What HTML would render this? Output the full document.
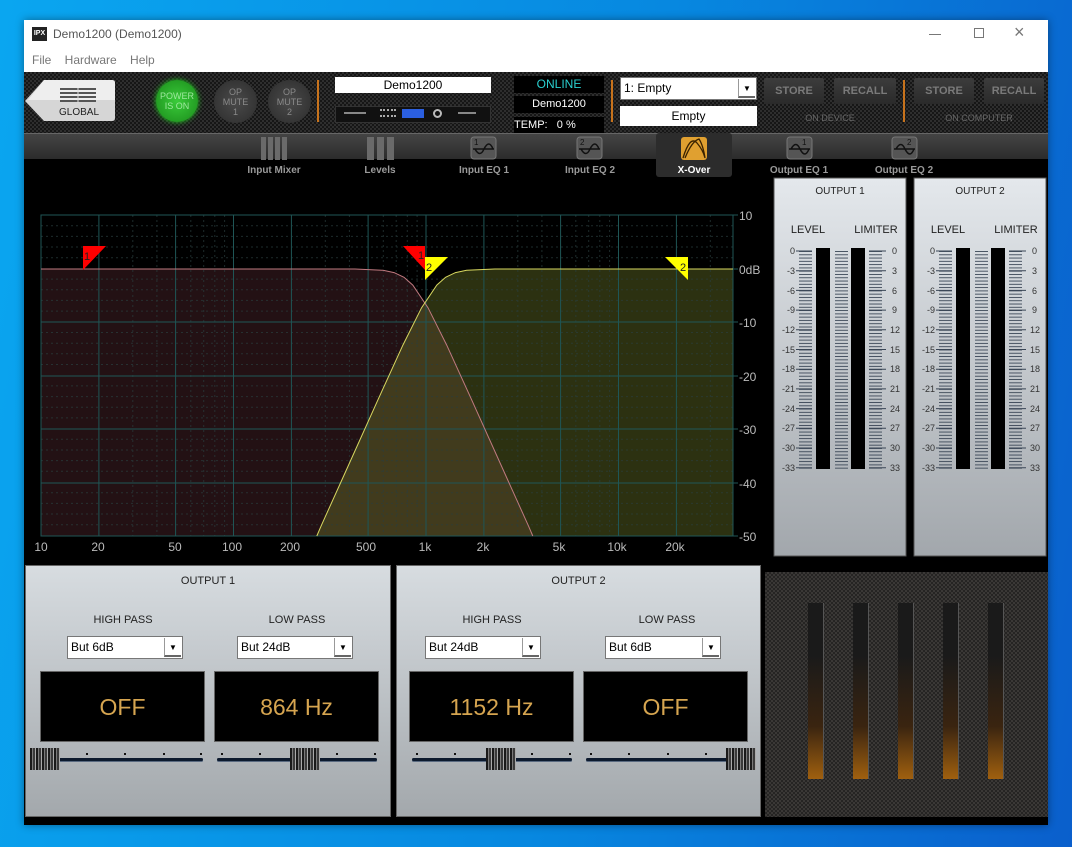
<!DOCTYPE html>
<html><head><meta charset="utf-8">
<style>
*{margin:0;padding:0;box-sizing:border-box}
body{width:1072px;height:847px;position:relative;overflow:hidden;font-family:"Liberation Sans",sans-serif;
background:linear-gradient(100deg,#0aa6f0 0%,#0788e0 55%,#0a5fcc 100%)}
.a{position:absolute}
.chk{background-color:#1c1c1c;background-image:repeating-conic-gradient(#2e2e2e 0 25%,#161616 0 50%);background-size:4px 4px}
.circ{border-radius:50%;text-align:center;font-size:9px;line-height:10px;color:#8a8a8a}
.btn{background:linear-gradient(#3c3c3c,#2a2a2a);color:#7a7a7a;font-size:11px;font-weight:bold;text-align:center;line-height:26px;border-radius:2px}
.tab{color:#9a9a9a;font-size:10px;font-weight:bold;text-align:center;width:100px}
.pan{background:linear-gradient(#d7dce0,#a3a8ac);border:1px solid #666}
.lbl{font-size:11px;color:#222;text-align:center}
.sel{background:#fff;border:1px solid #777;font-size:12px;color:#000;padding-left:3px;line-height:21px;height:23px}
.sel b{position:absolute;right:1px;top:1px;width:17px;height:19px;border-left:1px solid #999;border-bottom:2px solid #666;font-size:8px;text-align:center;line-height:19px;font-weight:normal}
.disp{background:#000;border:1px solid #666;color:#d6a550;font-size:23px;text-align:center;line-height:70px}
.trk{height:3px;background:#0c1a2e;border-radius:2px;box-shadow:0 1px 0 #5a6a80}
.knob{width:30px;height:22px;background:repeating-linear-gradient(90deg,#1a1a1a 0 2px,#7a7a7a 2px 3px,#3a3a3a 3px 5px,#aaa 5px 6px)}
.dot{width:2px;height:2px;background:#111}
</style></head><body>
<div class="a" style="left:24px;top:20px;width:1024px;height:805px;background:#000;box-shadow:0 0 8px rgba(0,0,0,.4)"></div>
<div class="a" style="left:24px;top:20px;width:1024px;height:52px;background:#fff"></div>
<div class="a" style="left:32px;top:27px;width:15px;height:14px;background:#222;color:#fff;font-size:7px;font-weight:bold;line-height:14px;text-align:center">IPX</div>
<div class="a" style="left:53px;top:27px;font-size:12px;color:#555">Demo1200 (Demo1200)</div>
<div class="a" style="left:32px;top:53px;font-size:12px;color:#777;word-spacing:10px">File Hardware Help</div>
<div class="a" style="left:929px;top:34px;width:12px;height:1px;background:#777"></div>
<div class="a" style="left:974px;top:28px;width:10px;height:10px;border:1px solid #777"></div>
<div class="a" style="left:1014px;top:22px;font-size:18px;color:#777">×</div>
<div class="a chk" style="left:24px;top:72px;width:1024px;height:62px"></div>
<svg class="a" style="left:24px;top:80px" width="92" height="42"><path d="M20 0H88Q91 0 91 3V38Q91 41 88 41H20L1 21Z" fill="#d6d6d6"/><path d="M20 0H88Q91 0 91 3V20H4Z" fill="#eee"/>
<g stroke="#555" stroke-width="2"><path d="M36 9h36M36 13h36M36 17h36M36 21h36"/></g><path d="M54 8v15" stroke="#ddd"/>
<text x="55" y="35" font-size="10" font-family="Liberation Sans" text-anchor="middle" fill="#222">GLOBAL</text></svg>
<div class="a circ" style="left:156px;top:80px;width:42px;height:42px;background:radial-gradient(#3acb3a,#1a8a1a);box-shadow:0 0 6px #2c2;color:#9ee89e;padding-top:11px">POWER<br>IS ON</div>
<div class="a circ" style="left:214px;top:80px;width:43px;height:43px;background:radial-gradient(#4a4a4a,#2c2c2c);padding-top:7px">OP<br>MUTE<br>1</div>
<div class="a circ" style="left:268px;top:80px;width:43px;height:43px;background:radial-gradient(#4a4a4a,#2c2c2c);padding-top:7px">OP<br>MUTE<br>2</div>
<div class="a" style="left:317px;top:80px;width:2px;height:42px;background:#c8731c"></div>
<div class="a" style="left:335px;top:77px;width:156px;height:16px;background:#fff;font-size:12px;text-align:center;line-height:16px">Demo1200</div>
<div class="a" style="left:335px;top:106px;width:156px;height:17px;background:#111;border:1px solid #333"></div>
<div class="a" style="left:402px;top:109px;width:22px;height:9px;background:#2b5fe0"></div>
<div class="a" style="left:433px;top:109px;width:9px;height:9px;border:2px solid #bbb;border-radius:50%"></div>
<div class="a" style="left:344px;top:112px;width:22px;height:2px;background:#888"></div>
<div class="a" style="left:380px;top:109px;width:16px;height:8px;border-top:2px dotted #aaa;border-bottom:2px dotted #aaa"></div>
<div class="a" style="left:458px;top:112px;width:18px;height:2px;background:#888"></div>
<div class="a" style="left:514px;top:76px;width:90px;height:17px;background:#000;color:#2ad0d0;font-size:12px;text-align:center;line-height:17px">ONLINE</div>
<div class="a" style="left:514px;top:96px;width:90px;height:17px;background:#000;color:#fff;font-size:11px;text-align:center;line-height:17px">Demo1200</div>
<div class="a" style="left:514px;top:117px;width:90px;height:16px;background:#000;color:#fff;font-size:11px;line-height:16px">TEMP:&nbsp;&nbsp; 0 %</div>
<div class="a" style="left:611px;top:80px;width:2px;height:42px;background:#c8731c"></div>
<div class="a sel" style="left:620px;top:77px;width:137px;height:23px">1: Empty<b>▼</b></div>
<div class="a" style="left:620px;top:106px;width:137px;height:20px;background:#fff;font-size:12px;text-align:center;line-height:20px">Empty</div>
<div class="a btn" style="left:764px;top:78px;width:60px;height:26px">STORE</div>
<div class="a btn" style="left:834px;top:78px;width:62px;height:26px">RECALL</div>
<div class="a" style="left:903px;top:80px;width:2px;height:42px;background:#c8731c"></div>
<div class="a btn" style="left:914px;top:78px;width:60px;height:26px">STORE</div>
<div class="a btn" style="left:984px;top:78px;width:60px;height:26px">RECALL</div>
<div class="a" style="left:764px;top:113px;width:132px;text-align:center;font-size:9px;color:#666">ON DEVICE</div>
<div class="a" style="left:914px;top:113px;width:130px;text-align:center;font-size:9px;color:#666">ON COMPUTER</div>
<div class="a" style="left:24px;top:133px;width:1024px;height:26px;background:linear-gradient(#444,#2c2c2c);border-top:1px solid #666"></div>
<div class="a" style="left:656px;top:133px;width:76px;height:44px;background:#2c2c2c;border-radius:3px"></div>
<svg class="a" style="left:0;top:133px" width="1072" height="30">
<g fill="#6a6a6a"><rect x="261" y="4" width="5" height="23"/><rect x="268" y="4" width="5" height="23"/><rect x="275" y="4" width="5" height="23"/><rect x="282" y="4" width="5" height="23"/>
<rect x="367" y="4" width="7" height="23"/><rect x="377" y="4" width="7" height="23"/><rect x="387" y="4" width="7" height="23"/></g>
<g fill="#555" stroke="#777"><rect x="471" y="4" width="25" height="22" rx="3"/><rect x="577" y="4" width="25" height="22" rx="3"/><rect x="787" y="4" width="25" height="22" rx="3"/><rect x="892" y="4" width="25" height="22" rx="3"/></g>
<g fill="none" stroke="#111" stroke-width="1.5"><path d="M473 16h21M475 16q5 9 9 0q5-10 9 0M579 16h21M581 16q5 9 9 0q5-10 9 0M789 16h21M791 16q5-9 9 0q5 10 9 0M894 16h21M896 16q5-9 9 0q5 10 9 0"/></g>
<g font-size="8" font-family="Liberation Sans" fill="#111"><text x="474" y="12">1</text><text x="580" y="12">2</text><text x="802" y="12">1</text><text x="907" y="12">2</text></g>
<rect x="681" y="4" width="26" height="23" rx="3" fill="#e0a030"/><path d="M683 25Q690 2 697 10Q703 17 705 25M685 25Q692 8 699 6Q703 12 705 25" fill="none" stroke="#3a2200" stroke-width="1.3"/>
</svg>
<div class="a tab" style="left:224px;top:165px">Input Mixer</div>
<div class="a tab" style="left:330px;top:165px">Levels</div>
<div class="a tab" style="left:434px;top:165px">Input EQ 1</div>
<div class="a tab" style="left:540px;top:165px">Input EQ 2</div>
<div class="a tab" style="left:644px;top:165px;color:#fff">X-Over</div>
<div class="a tab" style="left:749px;top:165px">Output EQ 1</div>
<div class="a tab" style="left:854px;top:165px">Output EQ 2</div>
<svg class="a" style="left:0;top:0" width="1072" height="847" font-family="Liberation Sans">
<defs>
<pattern id="tk" width="14" height="3.283" patternUnits="userSpaceOnUse" y="251"><path d="M0 0.5H14" stroke="#3a4656" stroke-width="0.9"/></pattern>
<linearGradient id="mp" x1="0" y1="0" x2="0" y2="1"><stop offset="0" stop-color="#e4e8ec"/><stop offset="1" stop-color="#a2a7ac"/></linearGradient>
</defs>
<path d="M41 269L354.9 269L383 270.3L394.1 272.6L404 277.3L412.8 285.1L428 307.7L446.7 345.1L470.7 397.7L504.6 473L528.7 526.4L532.8 536L41 536Z" fill="#3a1c22" fill-opacity="0.6"/>
<path d="M316.8 536L320.9 526.4L345 473L378.9 397.7L402.9 345.1L421.6 307.7L436.8 285.1L445.6 277.3L455.5 272.6L466.6 270.3L494.7 269L733 269L733 536Z" fill="#74802c" fill-opacity="0.38"/>
<g stroke="#2a3e3e" stroke-width="1" stroke-dasharray="2,3" fill="none" opacity="0.7">
<path d="M132.8 215V536M156.9 215V536M190.8 215V536M203.7 215V536M214.8 215V536M224.6 215V536M325.3 215V536M349.4 215V536M383.3 215V536M396.2 215V536M407.3 215V536M417.1 215V536M517.8 215V536M541.9 215V536M575.8 215V536M588.7 215V536M599.8 215V536M609.6 215V536M710.3 215V536"/>
<path d="M41 225.7H733M41 236.4H733M41 247H733M41 257.7H733M41 279.1H733M41 289.8H733M41 300.4H733M41 311.1H733M41 332.5H733M41 343.2H733M41 353.8H733M41 364.5H733M41 385.9H733M41 396.6H733M41 407.2H733M41 417.9H733M41 439.3H733M41 450H733M41 460.6H733M41 471.3H733M41 492.7H733M41 503.4H733M41 514H733M41 524.7H733"/>
</g>
<g stroke="#1f5656" stroke-width="1" fill="none">
<path d="M98.9 215V536M175.6 215V536M233.5 215V536M291.4 215V536M368.1 215V536M426 215V536M483.9 215V536M560.6 215V536M618.5 215V536M676.4 215V536"/>
<path d="M41 322H733M41 376H733M41 429H733M41 483H733"/>
<rect x="41" y="215" width="692" height="321"/>
<path d="M733 215h5M733 269h5M733 322h5M733 376h5M733 429h5M733 483h5M733 536h5"/>
</g>
<path d="M41 269L354.9 269L383 270.3L394.1 272.6L404 277.3L412.8 285.1L428 307.7L446.7 345.1L470.7 397.7L504.6 473L528.7 526.4L532.8 536" fill="none" stroke="#c07a80" stroke-width="1"/>
<path d="M316.8 536L320.9 526.4L345 473L378.9 397.7L402.9 345.1L421.6 307.7L436.8 285.1L445.6 277.3L455.5 272.6L466.6 270.3L494.7 269L733 269" fill="none" stroke="#d8d860" stroke-width="1"/>
<path d="M83 246H106L83 270Z" fill="#f00"/><path d="M403 246H425V270Z" fill="#f00"/>
<path d="M425 257H448L425 280Z" fill="#ff0"/><path d="M665 257H688V280Z" fill="#ff0"/>
<g font-size="11" fill="#222"><text x="84" y="260">1</text><text x="418" y="259">1</text><text x="426" y="271">2</text><text x="680" y="271">2</text></g>
<g font-size="12" fill="#bbb"><text x="739" y="220">10</text><text x="739" y="274">0dB</text><text x="739" y="327">-10</text><text x="739" y="381">-20</text><text x="739" y="434">-30</text><text x="739" y="488">-40</text><text x="739" y="541">-50</text></g>
<g font-size="12" fill="#bbb" text-anchor="middle"><text x="41" y="551">10</text><text x="98" y="551">20</text><text x="175" y="551">50</text><text x="232" y="551">100</text><text x="290" y="551">200</text><text x="366" y="551">500</text><text x="425" y="551">1k</text><text x="483" y="551">2k</text><text x="559" y="551">5k</text><text x="617" y="551">10k</text><text x="675" y="551">20k</text></g>
<g id="m1">
<rect x="774" y="178" width="132" height="378" fill="url(#mp)" stroke="#555"/>
<text x="808" y="233" font-size="11" text-anchor="middle" fill="#222">LEVEL</text>
<text x="876" y="233" font-size="11" text-anchor="middle" fill="#222">LIMITER</text>
<rect x="816" y="248" width="14" height="221" fill="#000"/><rect x="851" y="248" width="14" height="221" fill="#000"/>
<rect x="799" y="251" width="13" height="218" fill="url(#tk)"/><rect x="835" y="251" width="13" height="218" fill="url(#tk)"/><rect x="869" y="251" width="13" height="218" fill="url(#tk)"/>
<g stroke="#3a4656"><path d="M796 251h16M796 270.7h16M796 290.4h16M796 310.1h16M796 329.8h16M796 349.5h16M796 369.2h16M796 388.9h16M796 408.6h16M796 428.3h16M796 448h16M796 467.7h16M869 251h17M869 270.7h17M869 290.4h17M869 310.1h17M869 329.8h17M869 349.5h17M869 369.2h17M869 388.9h17M869 408.6h17M869 428.3h17M869 448h17M869 467.7h17"/></g>
<g font-size="9" fill="#333" text-anchor="end"><text x="795" y="254">0</text><text x="795" y="274">-3</text><text x="795" y="294">-6</text><text x="795" y="313">-9</text><text x="795" y="333">-12</text><text x="795" y="353">-15</text><text x="795" y="372">-18</text><text x="795" y="392">-21</text><text x="795" y="412">-24</text><text x="795" y="431">-27</text><text x="795" y="451">-30</text><text x="795" y="471">-33</text></g>
<g font-size="9" fill="#333"><text x="892" y="254">0</text><text x="892" y="274">3</text><text x="892" y="294">6</text><text x="892" y="313">9</text><text x="890" y="333">12</text><text x="890" y="353">15</text><text x="890" y="372">18</text><text x="890" y="392">21</text><text x="890" y="412">24</text><text x="890" y="431">27</text><text x="890" y="451">30</text><text x="890" y="471">33</text></g>
</g>
<use href="#m1" x="140"/>
<text x="840" y="194" font-size="10" text-anchor="middle" fill="#222">OUTPUT 1</text>
<text x="980" y="194" font-size="10" text-anchor="middle" fill="#222">OUTPUT 2</text>
</svg>
<div class="a pan" style="left:25px;top:565px;width:366px;height:252px"></div>
<div class="a pan" style="left:396px;top:565px;width:365px;height:252px"></div>
<div class="a lbl" style="left:25px;top:575px;width:366px">OUTPUT 1</div>
<div class="a lbl" style="left:396px;top:575px;width:365px">OUTPUT 2</div>
<div class="a lbl" style="left:63px;top:614px;width:120px">HIGH PASS</div>
<div class="a lbl" style="left:237px;top:614px;width:120px">LOW PASS</div>
<div class="a lbl" style="left:432px;top:614px;width:120px">HIGH PASS</div>
<div class="a lbl" style="left:607px;top:614px;width:120px">LOW PASS</div>
<div class="a sel" style="left:67px;top:636px;width:116px">But 6dB<b>▼</b></div>
<div class="a sel" style="left:237px;top:636px;width:116px">But 24dB<b>▼</b></div>
<div class="a sel" style="left:425px;top:636px;width:116px">But 24dB<b>▼</b></div>
<div class="a sel" style="left:605px;top:636px;width:116px">But 6dB<b>▼</b></div>
<div class="a disp" style="left:40px;top:671px;width:165px;height:71px">OFF</div>
<div class="a disp" style="left:214px;top:671px;width:165px;height:71px">864 Hz</div>
<div class="a disp" style="left:409px;top:671px;width:165px;height:71px">1152 Hz</div>
<div class="a disp" style="left:583px;top:671px;width:165px;height:71px">OFF</div>
<div class="a trk" style="left:32px;top:758px;width:171px"></div>
<div class="a trk" style="left:217px;top:758px;width:160px"></div>
<div class="a trk" style="left:412px;top:758px;width:160px"></div>
<div class="a trk" style="left:586px;top:758px;width:170px"></div>
<div class="a dot" style="left:86px;top:753px"></div><div class="a dot" style="left:124px;top:753px"></div><div class="a dot" style="left:163px;top:753px"></div><div class="a dot" style="left:200px;top:753px"></div>
<div class="a dot" style="left:221px;top:753px"></div><div class="a dot" style="left:259px;top:753px"></div><div class="a dot" style="left:336px;top:753px"></div><div class="a dot" style="left:374px;top:753px"></div>
<div class="a dot" style="left:416px;top:753px"></div><div class="a dot" style="left:454px;top:753px"></div><div class="a dot" style="left:531px;top:753px"></div><div class="a dot" style="left:569px;top:753px"></div>
<div class="a dot" style="left:590px;top:753px"></div><div class="a dot" style="left:628px;top:753px"></div><div class="a dot" style="left:667px;top:753px"></div><div class="a dot" style="left:705px;top:753px"></div>
<div class="a knob" style="left:30px;top:748px"></div>
<div class="a knob" style="left:290px;top:748px"></div>
<div class="a knob" style="left:486px;top:748px"></div>
<div class="a knob" style="left:726px;top:748px"></div>
<div class="a chk" style="left:765px;top:572px;width:283px;height:245px;background-image:repeating-conic-gradient(#3a3836 0 25%,#252423 0 50%)"></div>
<div class="a" style="left:808px;top:603px;width:16px;height:176px;background:linear-gradient(#1a1a1a 30%,#3a2410 70%,#a0600f 100%);border-right:1px solid #555"></div>
<div class="a" style="left:853px;top:603px;width:16px;height:176px;background:linear-gradient(#1a1a1a 30%,#3a2410 70%,#a0600f 100%);border-right:1px solid #555"></div>
<div class="a" style="left:898px;top:603px;width:16px;height:176px;background:linear-gradient(#1a1a1a 30%,#3a2410 70%,#a0600f 100%);border-right:1px solid #555"></div>
<div class="a" style="left:943px;top:603px;width:16px;height:176px;background:linear-gradient(#1a1a1a 30%,#3a2410 70%,#a0600f 100%);border-right:1px solid #555"></div>
<div class="a" style="left:988px;top:603px;width:16px;height:176px;background:linear-gradient(#1a1a1a 30%,#3a2410 70%,#a0600f 100%);border-right:1px solid #555"></div>
</body></html>
